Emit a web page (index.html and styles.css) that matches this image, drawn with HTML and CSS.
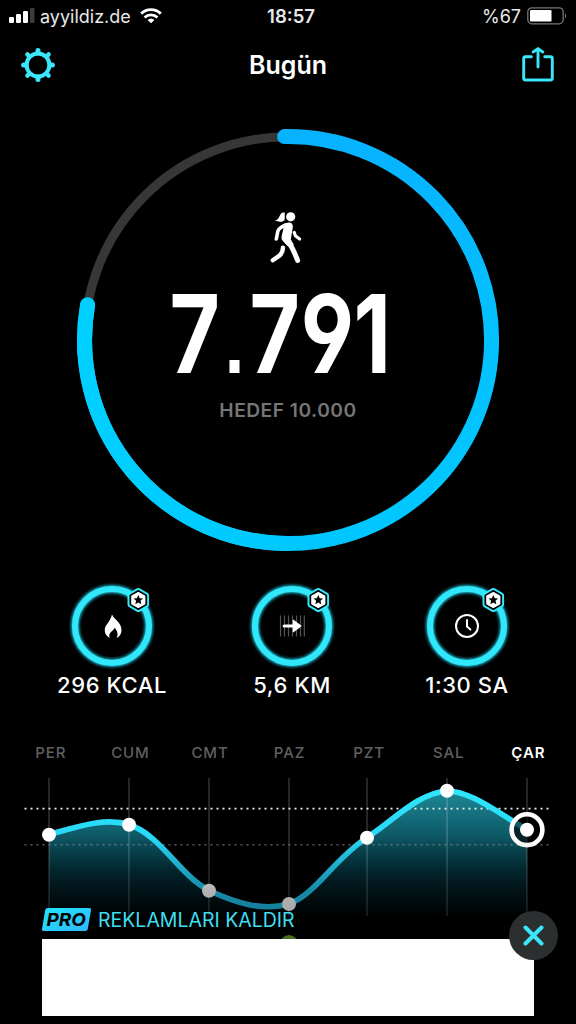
FILE: index.html
```
<!DOCTYPE html>
<html lang="tr">
<head>
<meta charset="UTF-8">
<meta name="viewport" content="width=device-width, initial-scale=1.0">
<title>Bugün</title>
<link rel="stylesheet" href="styles.css">
</head>
<body>
<div class="status-bar">
<div class="carrier">
<svg width="26" height="16" viewBox="0 0 26 16" fill="#fff">
<rect x="0" y="9" width="5" height="6" rx="1.3"/>
<rect x="7" y="6" width="5" height="9" rx="1.3"/>
<rect x="14" y="3" width="5" height="12" rx="1.3"/>
<rect x="21" y="0" width="4.5" height="15" rx="1.3" fill="#3d3d3d"/>
</svg>
<span class="carrier-name">ayyildiz.de</span>
<svg width="22" height="16" viewBox="0 0 22 16" fill="none" stroke="#fff" stroke-width="2.9">
<path d="M1.2 5.6a14 14 0 0 1 19.6 0"/>
<path d="M4.6 9.5a9.2 9.2 0 0 1 12.8 0"/>
<path d="M11 15.3l-3.4-3.2a5 5 0 0 1 6.8 0z" fill="#fff" stroke="none"/>
</svg>
</div>
<div class="clock">18:57</div>
<div class="battery">
<span>%67</span>
<svg width="41" height="18" viewBox="0 0 41 18">
<rect x="0.8" y="0.8" width="35.4" height="16" rx="4" fill="none" stroke="#777" stroke-width="1.3"/>
<rect x="3" y="3" width="21.5" height="11.6" rx="1.2" fill="#fff"/>
<path d="M38 6q2.4 2.8 0 5.6z" fill="#777"/>
</svg>
</div>
</div>

<div class="nav">
<svg width="34" height="34" viewBox="-17 -17 34 34">
<circle r="11.4" fill="none" stroke="#3be6fa" stroke-width="4"/>
<g stroke="#3be6fa" stroke-width="5" stroke-linecap="round">
<path d="M0-12V-14.4M0 12V14.4M-12 0H-14.4M12 0H14.4"/>
<path stroke-width="4.4" d="M8.8-8.8L10.6-10.6M-8.8-8.8L-10.6-10.6M8.8 8.8L10.6 10.6M-8.8 8.8L-10.6 10.6"/>
</g>
</svg>
<h1>Bugün</h1>
<svg class="share" width="32" height="36" viewBox="0 0 32 36" fill="none" stroke="#3be6fa" stroke-width="2.9" stroke-linecap="round" stroke-linejoin="round">
<path d="M9.4 9.7H3.4Q1.7 9.7 1.7 11.4V31.3Q1.7 33 3.4 33H28.6Q30.3 33 30.3 31.3V11.4Q30.3 9.7 28.6 9.7H22.7"/>
<path d="M16 20V1.7M11.2 5L16 1.6L20.8 5"/>
</svg>
</div>

<div class="goal-ring">
<svg class="ring" width="424" height="424" viewBox="76 128 424 424" fill="none">
<defs>
<linearGradient id="ringFill" x1="0" y1="0" x2="0" y2="1">
<stop offset="0" stop-color="#07b2ff"/>
<stop offset="0.45" stop-color="#04c0ff"/>
<stop offset="1" stop-color="#00c8ff"/>
</linearGradient>
<linearGradient id="ringEnd" gradientUnits="userSpaceOnUse" x1="77" y1="0" x2="288" y2="0">
<stop offset="0" stop-color="#00d0ff"/>
<stop offset="1" stop-color="#00c8ff"/>
</linearGradient>
</defs>
<circle cx="288" cy="340" r="203.3" stroke="#373737" stroke-width="9"/>
<path d="M284.6 136.6A203.5 203.5 0 1 1 87.6 305" stroke="url(#ringFill)" stroke-width="15" stroke-linecap="round"/>
<path d="M288 543.5A203.5 203.5 0 0 1 87.6 305" stroke="url(#ringEnd)" stroke-width="15" stroke-linecap="round"/>
</svg>
<div class="goal-content">
<svg class="walker" width="32" height="52" viewBox="0 0 32 52" fill="none" stroke="#fff" stroke-linecap="round" stroke-linejoin="round">
<circle cx="20.7" cy="4.8" r="4.6" fill="#fff" stroke="none"/>
<path d="M14.9 .6C11.5 0 10.2 2.4 9.4 4.6C8.4 7 7.2 8 5 8.6C8.5 10 12.5 10 14.2 8.4C15.6 6.6 14.2 3.4 14.9 .6Z" fill="#fff" stroke="none"/>
<path d="M13.5 12.6Q17 10 20.6 10.8Q23.4 12 22.7 16L20.8 27.5L24 33L18 34L12.5 28.6Q11.2 27 11.6 24.5L13.2 17.5Z" fill="#fff" stroke="none"/>
<path d="M15 13.2Q8.8 16 7.8 19.5L6.3 27" stroke-width="3.6"/>
<path d="M15 26.5Q16 29.5 20 32.8Q22.5 35.5 27.6 48.4" stroke-width="5"/>
<path d="M12.9 35.7Q13 40.5 9.8 43.4L2.8 48.3" stroke-width="4.4"/>
<path d="M24.2 20.4L25.4 23.8L29.6 27.1" stroke-width="3.2"/>
</svg>
<svg class="steps" width="240" height="140" viewBox="0 0 240 140">
<text transform="translate(0 105) scale(0.8 1)" x="2 71 102 166 232">7<tspan class="dot">.</tspan>791</text>
</svg>
<div class="goal-label">HEDEF 10.000</div>
</div>
</div>

<svg class="defs">
<defs>
<g id="badge" stroke-linejoin="round">
<path d="M0-9.2L8-4.6V4.6L0 9.2L-8 4.6V-4.6Z" fill="#000" stroke="#35e9fc" stroke-width="5.6"/>
<path d="M0-9.2L8-4.6V4.6L0 9.2L-8 4.6V-4.6Z" fill="#000" stroke="#000" stroke-width="1.6"/>
<path d="M0-7.3L6.3-3.7V3.7L0 7.3L-6.3 3.7V-3.7Z" fill="#fff" stroke="#fff" stroke-width="1.6"/>
<path d="M0-4.9L1.4-1.7L4.8-1.4L2.2.8L3 4.2L0 2.4L-3 4.2L-2.2.8L-4.8-1.4L-1.4-1.7Z" fill="#000"/>
</g>
</defs>
</svg>

<div class="stats">
<div class="stat">
<svg width="92" height="92" viewBox="-46 -46 92 92">
<circle class="glow" r="37"/>
<circle class="stat-ring" r="37"/>
<path d="M-1-12C1-7 8.5-4 8.5 3.5C8.5 8 6 10.5 3.5 11.5C6 7 3.5 4 1.8 1.2C0 5-5.5 6-3.2 11.5C-7 9.5-8.5 6.5-8.2 3C-8-2-3-4-1-12Z" transform="translate(1 .5)" fill="#fff"/>
<use href="#badge" x="26.3" y="-26"/>
</svg>
<div class="stat-value">296 KCAL</div>
</div>
<div class="stat">
<svg width="92" height="92" viewBox="-46 -46 92 92">
<circle class="glow" r="37"/>
<circle class="stat-ring" r="37"/>
<path d="M-11.5-10.5V10.5M-7.5-10.5V10.5M-3.5-10.5V10.5M.5-10.5V10.5M4.5-10.5V10.5M8.5-10.5V10.5M12.3-10.5V10.5" stroke="#555" stroke-width="1.2"/>
<path d="M-7.8 0H4" stroke="#fff" stroke-width="3.2" stroke-linecap="round"/>
<path d="M1.2-6L9.2 0L1.2 6Z" fill="#fff" stroke="#fff" stroke-linejoin="round"/>
<use href="#badge" x="26.3" y="-26"/>
</svg>
<div class="stat-value">5,6 KM</div>
</div>
<div class="stat">
<svg width="92" height="92" viewBox="-46 -46 92 92">
<circle class="glow" r="37"/>
<circle class="stat-ring" r="37"/>
<circle r="11" fill="none" stroke="#fff" stroke-width="2"/>
<path d="M0-6V.5L3.4 3.6" fill="none" stroke="#fff" stroke-width="2" stroke-linecap="round"/>
<use href="#badge" x="26.3" y="-26"/>
</svg>
<div class="stat-value">1:30 SA</div>
</div>
</div>

<div class="days">
<span>PER</span>
<span>CUM</span>
<span>CMT</span>
<span>PAZ</span>
<span>PZT</span>
<span>SAL</span>
<span class="today">ÇAR</span>
</div>

<svg class="chart" width="576" height="174" viewBox="0 770 576 174" fill="none">
<defs>
<linearGradient id="area" gradientUnits="userSpaceOnUse" x1="0" y1="791" x2="0" y2="918">
<stop offset="0" stop-color="#1e8896"/>
<stop offset="0.3" stop-color="#10606e"/>
<stop offset="0.62" stop-color="#03303a"/>
<stop offset="1" stop-color="#000"/>
</linearGradient>
<linearGradient id="line" gradientUnits="userSpaceOnUse" x1="0" y1="791" x2="0" y2="907">
<stop offset="0" stop-color="#2ee6fb"/>
<stop offset="1" stop-color="#1fc0ec"/>
</linearGradient>
<linearGradient id="fade" gradientUnits="userSpaceOnUse" x1="0" y1="838" x2="0" y2="944">
<stop offset="0" stop-color="#000" stop-opacity="0"/>
<stop offset="0.5" stop-color="#000" stop-opacity="0.3"/>
<stop offset="1" stop-color="#000" stop-opacity="0.4"/>
</linearGradient>
</defs>
<path fill="url(#area)" d="M49 834.5C77 827 104 817 129 824.5C162 836 178 874 209 890.5C238 904 263 911 289 904C316 894 334 859 367 837.5C394 820 418 793 447 791C472 791 502 816 527 829.5V918H49Z"/>
<path stroke="#fff" stroke-opacity="0.2" stroke-width="1.5" d="M49 778V916M129 778V916M209 778V916M289 778V916M367 778V916M447 778V916M527 778V916"/>
<path stroke="#eee" stroke-width="1.8" stroke-dasharray="2 4" d="M24.5 808.6H550"/>
<path stroke="#999" stroke-opacity="0.6" stroke-width="1.4" stroke-dasharray="2 4" d="M24.5 844.7H550"/>
<path stroke="url(#line)" stroke-width="5.6" d="M49 834.5C77 827 104 817 129 824.5C162 836 178 874 209 890.5C238 904 263 911 289 904C316 894 334 859 367 837.5C394 820 418 793 447 791C472 791 502 816 527 829.5"/>
<circle cx="527" cy="829.7" r="15.4" fill="#000" fill-opacity="0.6" stroke="#fff" stroke-width="4.6"/>
<g fill="#fff">
<circle cx="49" cy="834.7" r="7"/>
<circle cx="129" cy="824.7" r="7"/>
<circle cx="209" cy="890.8" r="7"/>
<circle cx="289" cy="904" r="7"/>
<circle cx="367" cy="837.7" r="7"/>
<circle cx="447" cy="790.8" r="7"/>
<circle cx="527" cy="829.7" r="7"/>
</g>
<circle cx="289" cy="943.5" r="8.6" fill="#74b32a"/>
<rect y="838" width="576" height="106" fill="url(#fade)"/>
</svg>

<div class="ad">
<div class="remove-ads">
<svg width="49" height="23" viewBox="0 0 49 23">
<defs>
<linearGradient id="pro" x1="0" y1="0" x2="1" y2="1">
<stop offset="0" stop-color="#20e6fb"/>
<stop offset="1" stop-color="#30b8ff"/>
</linearGradient>
</defs>
<path d="M6 0H47Q49.3 0 49 2L45.8 21Q45.4 23 43.4 23H2Q-.3 23 0 21L3.2 2Q3.6 0 6 0Z" fill="url(#pro)"/>
<text class="pro-text" x="4.5" y="18" textLength="39.5" lengthAdjust="spacingAndGlyphs">PRO</text>
</svg>
<span>REKLAMLARI KALDIR</span>
</div>
<div class="banner"></div>
<button class="close">
<svg width="21" height="21" viewBox="0 0 21 21">
<path d="M2.5 2.5L18.5 18.5M18.5 2.5L2.5 18.5" stroke="#3be6fa" stroke-width="4" stroke-linecap="round"/>
</svg>
</button>
</div>
</body>
</html>
```
FILE: styles.css
```
/* Reset styles */
* {
margin: 0;
padding: 0;
box-sizing: border-box;
}
body {
width: 576px;
height: 1024px;
overflow: hidden;
background-color: #000;
color: #fff;
font-family: Inter, "Liberation Sans", sans-serif;
}
svg {
display: block;
flex: none;
}
.defs {
width: 0;
height: 0;
}
/* Status bar */
.status-bar {
height: 32px;
padding: 0 8px 0 9px;
display: grid;
grid-template-columns: 1fr auto 1fr;
align-items: center;
font-size: 18px;
color: #e8e8e8;
}
.carrier {
display: flex;
align-items: center;
}
.carrier-name {
margin: 0 9px 0 5px;
font-size: 18px;
}
.clock {
font-size: 18.5px;
font-weight: 600;
margin-left: 5px;
}
.battery {
display: flex;
justify-content: flex-end;
align-items: center;
gap: 6px;
}
/* Navigation */
.nav {
height: 66px;
padding: 0 22px 0 21px;
display: flex;
justify-content: space-between;
align-items: center;
}
.nav h1 {
font-size: 25px;
font-weight: 600;
margin-left: -1px;
}
/* Step ring */
.goal-ring {
display: grid;
justify-items: center;
margin-top: 30px;
height: 424px;
}
.goal-ring .ring,
.goal-content {
grid-area: 1 / 1;
}
.goal-content {
display: flex;
flex-direction: column;
align-items: center;
padding-top: 84px;
}
.walker {
margin-right: 4px;
}
.steps {
margin: 4px 0 -20px;
}
.steps text {
font-family: Inter, sans-serif;
font-size: 108.5px;
font-weight: 700;
font-feature-settings: "cv04";
fill: #fff;
}
.steps .dot {
font-family: "Liberation Sans", sans-serif;
font-size: 88px;
font-weight: 700;
}
.goal-label {
margin-top: 9px;
font-size: 19.2px;
font-weight: 600;
line-height: 26px;
letter-spacing: 0.5px;
color: #767676;
}
/* Stats */
.stats {
display: grid;
grid-template-columns: 180px 180px 170px;
margin: 28px 0 0 22px;
}
.stat {
display: flex;
flex-direction: column;
align-items: center;
}
.stat-ring {
fill: none;
stroke: #31e8fb;
stroke-width: 6;
}
.glow {
fill: none;
stroke: #1bbdd6;
stroke-width: 8;
filter: blur(1.8px);
}
.stat-value {
margin-top: -1px;
font-size: 22px;
font-weight: 500;
line-height: 28px;
letter-spacing: 0.6px;
}
/* Week chart */
.days {
display: grid;
grid-template-columns: repeat(7, 79.6px);
margin: 43px 0 0 11px;
font-size: 15px;
font-weight: 500;
line-height: 22px;
letter-spacing: 0.9px;
text-align: center;
color: #606060;
}
.days .today {
color: #fff;
font-weight: 600;
}
.chart {
margin-top: 6px;
}
/* Ad overlay */
.ad {
position: absolute;
left: 42px;
top: 908px;
width: 492px;
}
.remove-ads {
display: flex;
align-items: center;
gap: 7px;
height: 23px;
font-size: 19.5px;
color: #3fdff0;
}
.pro-text {
font-family: Inter, sans-serif;
font-size: 18px;
font-weight: 700;
font-style: italic;
}
.banner {
height: 77px;
margin-top: 8px;
background-color: #fff;
}
.close {
position: absolute;
top: 3px;
right: -24px;
width: 49px;
height: 49px;
border: none;
border-radius: 50%;
background-color: #2b2f30;
display: flex;
justify-content: center;
align-items: center;
cursor: pointer;
}
```
